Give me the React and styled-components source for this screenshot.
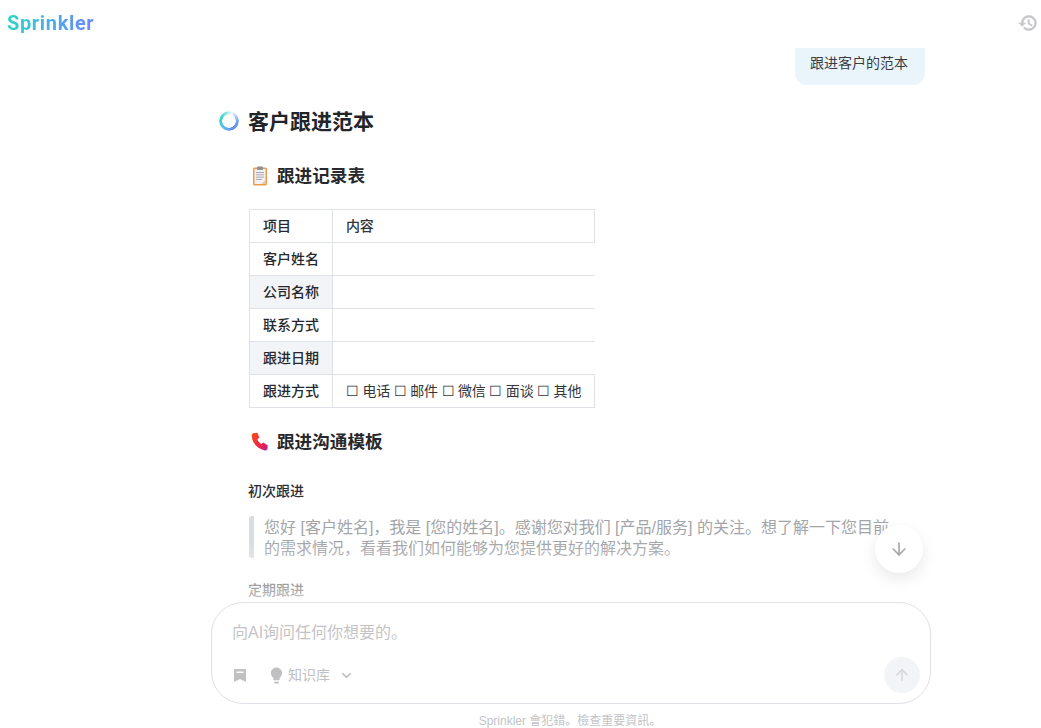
import React from "react";
import styled, { createGlobalStyle } from "styled-components";
import { ArrowDown, ArrowUp, ChevronDown } from "lucide-react";
import { MdLightbulb } from "react-icons/md";

const Global = createGlobalStyle`
  html, body { margin: 0; padding: 0; height: 100%; background: #fff; overflow: hidden; }
  #root { height: 100%; }
  * { box-sizing: border-box; }
  body { font-family: "Liberation Sans", "Noto Sans CJK SC", sans-serif; color: #22242a; }
`;

const Page = styled.div`
  height: 728px;
  display: flex;
  flex-direction: column;
  position: relative;
  overflow: hidden;
`;
const Header = styled.header`
  height: 48px;
  flex: none;
  display: flex;
  align-items: center;
  justify-content: space-between;
  padding: 0 3px 0 7px;
`;
const Logo = styled.div`
  font-family: Roboto, "Liberation Sans", sans-serif;
  font-weight: 700;
  font-size: 20px;
  letter-spacing: 0.65px;
  line-height: 1;
  margin-top: -2px;
  background: linear-gradient(90deg, #2ad6c6 0%, #6d86ff 100%);
  -webkit-background-clip: text;
  background-clip: text;
  color: transparent;
`;
const HistoryBtn = styled.div`
  width: 20px;
  height: 20px;
  margin-top: -2px;
  color: #c6c6ca;
  display: flex;
`;
const Scroll = styled.main`
  flex: none;
  height: 554px;
  overflow: hidden;
  position: relative;
`;
const Column = styled.div`
  width: 706px;
  margin-left: 219px;
  margin-top: -12px;
`;
const BubbleRow = styled.div`
  display: flex;
  justify-content: flex-end;
`;
const Bubble = styled.div`
  width: 130px;
  height: 49px;
  background: #e9f4fb;
  border-radius: 12px;
  font-size: 14px;
  line-height: 20px;
  padding: 17px 0 0 15px;
  color: #3a3c42;
  white-space: nowrap;
`;
const TitleRow = styled.div`
  display: flex;
  align-items: center;
  gap: 9px;
  margin-top: 20px;
  height: 30px;
`;
const Ring = styled.span`
  width: 20px;
  height: 20px;
  border-radius: 50%;
  flex: none;
  margin-top: 2px;
  background: conic-gradient(from 20deg, #f2f6fd 0deg, #6fa6f5 70deg, #5f8df5 130deg, #64bfe6 210deg, #34d3cd 265deg, #8fe3e0 320deg, #f2f6fd 360deg);
  -webkit-mask: radial-gradient(circle, transparent 6.5px, #000 7px);
  mask: radial-gradient(circle, transparent 6.5px, #000 7px);
`;
const Title = styled.h1`
  margin: 4px 0 0;
  font-size: 21px;
  font-weight: 700;
  line-height: 30px;
  color: #22242a;
`;
const Body = styled.div`
  padding-left: 29px;
`;
const SectionHead = styled.h2`
  margin: ${(p) => p.$top}px 0 0;
  height: 26px;
  display: flex;
  align-items: center;
  gap: 8px;
  padding-left: 3px;
  font-size: 17.6px;
  font-weight: 700;
  line-height: 26px;
  color: #26282e;
`;
const Table = styled.div`
  margin: 20px 0 0 1px;
  width: 346px;
  display: grid;
  grid-template-columns: 83px 262px;
  grid-auto-rows: 33px;
  font-size: 14px;
  line-height: 20px;
  border-top: 1px solid #dfe1e8;
  border-left: 1px solid #dfe1e8;
`;
const Key = styled.div`
  display: flex;
  align-items: center;
  padding: 0 0 1px 13px;
  font-weight: 500;
  color: #26282e;
  border-right: 1px solid #dfe1e8;
  border-bottom: 1px solid #dfe1e8;
  background: ${(p) => (p.$shaded ? "#f3f4f8" : "#fff")};
`;
const Val = styled.div`
  display: flex;
  align-items: center;
  padding: 0 0 1px 13px;
  white-space: nowrap;
  letter-spacing: -0.2px;
  font-weight: ${(p) => (p.$strong ? 500 : 400)};
  color: #33353b;
  border-bottom: 1px solid #dfe1e8;
  border-right: 1px solid ${(p) => (p.$closed ? "#dfe1e8" : "transparent")};
`;
const SubHead = styled.h3`
  margin: ${(p) => p.$top}px 0 0;
  font-size: 14px;
  font-weight: 500;
  line-height: 20px;
  color: #2c2e34;
`;
const Quote = styled.blockquote`
  margin: 15px 0 0 1px;
  width: 650px;
  height: 42px;
  padding: 1px 0 0 10px;
  border-left: 5px solid #d9dde3;
  border-radius: 3px;
  font-size: 16px;
  line-height: 21px;
  color: #a3a5a9;
`;
const Fade = styled.div`
  position: absolute;
  left: 0;
  right: 0;
  bottom: 0;
  height: 60px;
  background: linear-gradient(180deg, rgba(255,255,255,0) 0%, rgba(255,255,255,0.75) 100%);
  pointer-events: none;
`;
const ScrollDown = styled.button`
  position: absolute;
  left: 875px;
  top: 525px;
  width: 48px;
  height: 48px;
  border: 0;
  border-radius: 50%;
  background: #fff;
  color: #a8a8a8;
  box-shadow: 0 6px 16px rgba(0,0,0,0.09);
  display: flex;
  align-items: center;
  justify-content: center;
  padding: 0;
`;
const Composer = styled.div`
  flex: none;
  width: 720px;
  height: 102px;
  margin-left: 211px;
  border: 1px solid #e0e0e8;
  border-radius: 32px;
  background: #fff;
  padding: 0 10px 0 20px;
  display: flex;
  flex-direction: column;
`;
const Placeholder = styled.div`
  margin-top: 18px;
  font-size: 16px;
  line-height: 24px;
  color: #c4c4c6;
  white-space: nowrap;
`;
const Toolbar = styled.div`
  margin-top: 12px;
  height: 36px;
  display: flex;
  align-items: center;
  color: #c0c0c2;
`;
const ToolIcon = styled.span`
  display: flex;
  font-size: ${(p) => p.$size}px;
  margin-left: ${(p) => p.$left}px;
`;
const ToolLabel = styled.span`
  font-size: 14px;
  line-height: 20px;
  margin-left: 2px;
  margin-bottom: 1px;
`;
const Send = styled.button`
  margin-left: auto;
  width: 36px;
  height: 36px;
  border: 0;
  padding: 0;
  border-radius: 50%;
  background: #f3f4f8;
  color: #d6d6da;
  display: flex;
  align-items: center;
  justify-content: center;
`;
const Disclaimer = styled.div`
  text-align: center;
  width: 720px;
  margin-left: 210px;
  margin-top: 8px;
  font-size: 12px;
  line-height: 18px;
  color: #c4c4c6;
  white-space: nowrap;
`;

const HistoryIcon = () => (
  <svg width="20" height="20" viewBox="0 0 24 24" fill="currentColor" stroke="currentColor" strokeWidth="0.9" aria-hidden="true">
    <path d="M13 3a9 9 0 0 0-9 9H1l3.890 3.890.07.14L9 12H6c0-3.870 3.130-7 7-7s7 3.130 7 7-3.130 7-7 7c-1.930 0-3.680-.79-4.940-2.060l-1.420 1.420A8.954 8.954 0 0 0 13 21a9 9 0 0 0 0-18zm-1 5v5l4.280 2.540.72-1.210-3.500-2.080V8H12z" />
  </svg>
);
const Clipboard = () => (
  <svg width="18" height="20" viewBox="0 0 18 20" aria-hidden="true">
    <rect x="2" y="1.500" width="14" height="18" rx="1.500" fill="#ee9c4a" />
    <rect x="3.500" y="3" width="11" height="15" fill="#f4f1f2" />
    <path d="M10.500 18 14.500 14v4z" fill="#d9c8b4" />
    <rect x="6" y="0.500" width="6" height="3.500" rx="1" fill="#8f8f96" />
    <path d="M5 6.500h8M5 8.800h8M5 11.100h8M5 13.400h6" stroke="#a9a7b2" strokeWidth="1" />
  </svg>
);
const Phone = () => (
  <svg width="18" height="20" viewBox="0 0 18 20" aria-hidden="true">
    <defs>
      <linearGradient id="ph" x1="0" y1="0" x2="1" y2="1">
        <stop offset="0" stopColor="#f4511e" />
        <stop offset="0.65" stopColor="#ee2347" />
        <stop offset="1" stopColor="#a8239b" />
      </linearGradient>
    </defs>
    <path d="M2.500 1 6.500 .8l1.800 5-2 1.500c.8 2 2.100 3.600 4 4.700l2-1.400 4.500 2.800-.4 3.600c-.3 1-1.400 1.700-2.600 1.400C6.500 17 1.300 11 .8 4.500.600 2.800 1.200 1.500 2.500 1z" fill="url(#ph)" />
  </svg>
);
const Bookmark = () => (
  <svg width="12" height="13" viewBox="0 0 12 13" fill="currentColor" aria-hidden="true">
    <path d="M1 0h10a1 1 0 0 1 1 1v12L6 10 0 13V1a1 1 0 0 1 1-1z" />
    <rect x="2.500" y="2.500" width="7" height="1.500" fill="#fff" />
  </svg>
);

const rows = [
  ["项目", "内容", { closed: true, strong: true }],
  ["客户姓名", ""],
  ["公司名称", "", { shaded: true }],
  ["联系方式", ""],
  ["跟进日期", "", { shaded: true }],
  ["跟进方式", "☐ 电话 ☐ 邮件 ☐ 微信 ☐ 面谈 ☐ 其他", { closed: true }],
];

export default function App() {
  return (
    <Page>
      <Global />
      <Header>
        <Logo>Sprinkler</Logo>
        <HistoryBtn><HistoryIcon /></HistoryBtn>
      </Header>
      <Scroll>
        <Column>
          <BubbleRow><Bubble>跟进客户的范本</Bubble></BubbleRow>
          <TitleRow>
            <Ring />
            <Title>客户跟进范本</Title>
          </TitleRow>
          <Body>
            <SectionHead $top={28}><Clipboard />跟进记录表</SectionHead>
            <Table>
              {rows.map(([k, v, o = {}]) => (
                <React.Fragment key={k}>
                  <Key $shaded={o.shaded}>{k}</Key>
                  <Val $closed={o.closed} $strong={o.strong}>{v}</Val>
                </React.Fragment>
              ))}
            </Table>
            <SectionHead $top={21}><Phone />跟进沟通模板</SectionHead>
            <SubHead $top={26}>初次跟进</SubHead>
            <Quote>您好 [客户姓名]，我是 [您的姓名]。感谢您对我们 [产品/服务] 的关注。想了解一下您目前的需求情况，看看我们如何能够为您提供更好的解决方案。</Quote>
            <SubHead $top={22}>定期跟进</SubHead>
          </Body>
        </Column>
        <Fade />
      </Scroll>
      <ScrollDown aria-label="scroll down"><ArrowDown size={20} strokeWidth={2} /></ScrollDown>
      <Composer>
        <Placeholder>向AI询问任何你想要的。</Placeholder>
        <Toolbar>
          <ToolIcon $size={12} $left={2}><Bookmark /></ToolIcon>
          <ToolIcon $size={19} $left={21}><MdLightbulb /></ToolIcon>
          <ToolLabel>知识库</ToolLabel>
          <ToolIcon $size={15} $left={9}><ChevronDown size={15} strokeWidth={2.5} /></ToolIcon>
          <Send aria-label="send"><ArrowUp size={18} /></Send>
        </Toolbar>
      </Composer>
      <Disclaimer>Sprinkler 會犯錯。檢查重要資訊。</Disclaimer>
    </Page>
  );
}
